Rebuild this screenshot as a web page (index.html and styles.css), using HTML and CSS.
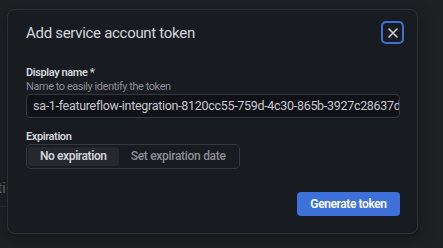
FILE: index.html
```html
<!DOCTYPE html>
<html>
<head>
<meta charset="utf-8">
<link rel="stylesheet" href="styles.css">
</head>
<body>
<div class="backdrop">
  <div class="ghost">
    <div class="ghost-text">ati</div>
    <div class="ghost-line"></div>
  </div>
</div>
<div class="modal">
  <div class="modal-header">
    <h2 class="modal-title">Add service account token</h2>
    <button class="close-btn" aria-label="Close">
      <svg width="12" height="12" viewBox="0 0 12 12"><path d="M2 2 L10 10 M10 2 L2 10" stroke="#d0d1d8" stroke-width="1.6" stroke-linecap="round"/></svg>
    </button>
  </div>
  <div class="field">
    <div class="label">Display name *</div>
    <div class="desc">Name to easily identify the token</div>
    <div class="input">sa-1-featureflow-integration-8120cc55-759d-4c30-865b-3927c28637dc</div>
  </div>
  <div class="field field-exp">
    <div class="label">Expiration</div>
    <div class="radio-group">
      <div class="radio active">No expiration</div>
      <div class="radio">Set expiration date</div>
    </div>
  </div>
  <div class="footer">
    <button class="primary">Generate token</button>
  </div>
</div>
</body>
</html>
```
FILE: styles.css
```css
html, body {
  margin: 0;
  padding: 0;
}
body {
  width: 443px;
  height: 248px;
  background: #1f2023;
  font-family: Roboto, "Noto Sans", sans-serif;
  overflow: hidden;
  position: relative;
}
.backdrop {
  position: absolute;
  inset: 0;
  background: #1f2023;
}
.ghost {
  position: absolute;
  left: 0;
  top: 180px;
  width: 20px;
}
.ghost-text {
  font-size: 14px;
  color: #6c6e74;
  margin-left: -10px;
  line-height: 16px;
}
.ghost-line {
  margin-top: 10px;
  height: 1px;
  background: #2c2e32;
}
.modal {
  position: absolute;
  left: 7px;
  top: 9px;
  width: 409px;
  height: 223px;
  box-sizing: content-box;
  background: #181b1f;
  border: 1px solid #2d2f34;
  border-radius: 8px;
  padding: 0;
  box-shadow: 0 4px 16px rgba(0,0,0,0.35);
  display: flex;
  flex-direction: column;
}
.modal-header {
  display: flex;
  align-items: center;
  justify-content: space-between;
  padding: 11px 13px 0 18px;
  height: 23px;
}
.modal-title {
  margin: 0;
  font-size: 15px;
  font-weight: 400;
  letter-spacing: -0.3px;
  color: #d5d6dd;
  line-height: 22px;
}
.close-btn {
  width: 23px;
  height: 23px;
  border: 2px solid #3d71d9;
  border-radius: 5px;
  background: #181b1f;
  padding: 0;
  display: flex;
  align-items: center;
  justify-content: center;
}
.field {
  padding: 0 17px 0 18px;
  margin-top: 21px;
}
.label {
  font-size: 11px;
  font-weight: 600;
  letter-spacing: -0.4px;
  color: #d5d6dd;
  line-height: 15px;
}
.desc {
  font-size: 11px;
  letter-spacing: -0.45px;
  color: #8d8e95;
  line-height: 14px;
}
.input {
  margin-top: 0;
  height: 24px;
  box-sizing: border-box;
  border: 1px solid #35383d;
  border-radius: 4px;
  background: #111217;
  color: #c8c9d1;
  font-size: 12.5px;
  letter-spacing: -0.3px;
  line-height: 22px;
  padding: 0 6px;
  white-space: nowrap;
  overflow: hidden;
}
.field-exp {
  margin-top: 11px;
}
.radio-group {
  display: inline-flex;
  height: 25px;
  box-sizing: border-box;
  border: 1px solid #35383d;
  border-radius: 5px;
  padding: 2px 1px;
}
.radio {
  font-size: 12px;
  font-weight: 500;
  letter-spacing: -0.3px;
  color: #8d8e95;
  line-height: 19px;
  padding: 0 12px;
  border-radius: 3px;
}
.radio.active {
  background: #25282d;
  color: #d0d1d8;
  font-weight: 600;
  letter-spacing: -0.4px;
}
.footer {
  display: flex;
  justify-content: flex-end;
  padding: 0 17px 0 18px;
  margin-top: 23px;
}
.primary {
  height: 24px;
  width: 103px;
  border: none;
  border-radius: 4px;
  background: #3d71d9;
  color: #ffffff;
  font-family: Roboto, "Noto Sans", sans-serif;
  font-size: 12px;
  font-weight: 600;
  letter-spacing: -0.4px;
  padding: 0;
}
```
